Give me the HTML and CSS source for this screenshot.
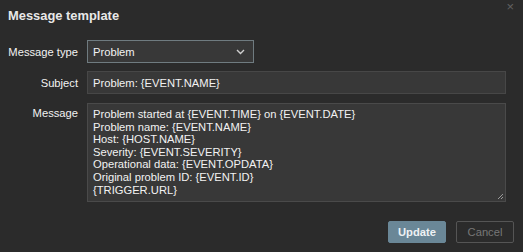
FILE: index.html
```html
<!DOCTYPE html>
<html>
<head>
<meta charset="utf-8">
<link rel="stylesheet" href="styles.css">
</head>
<body>
<div class="dialog">
  <div class="header">
    <h1 class="title">Message template</h1>
    <span class="close">×</span>
  </div>
  <div class="form">
    <label class="label label-type">Message type</label>
    <div class="select">
      <span>Problem</span>
      <svg class="chev" width="9" height="6" viewBox="0 0 9 6"><path d="M1 1 L4.5 4.5 L8 1" fill="none" stroke="#cfcfcf" stroke-width="1.4"/></svg>
    </div>
    <label class="label">Subject</label>
    <div class="input">Problem: {EVENT.NAME}</div>
    <label class="label label-msg">Message</label>
    <div class="textarea">Problem started at {EVENT.TIME} on {EVENT.DATE}<br>Problem name: {EVENT.NAME}<br>Host: {HOST.NAME}<br>Severity: {EVENT.SEVERITY}<br>Operational data: {EVENT.OPDATA}<br>Original problem ID: {EVENT.ID}<br>{TRIGGER.URL}
      <svg class="grip" width="8" height="8" viewBox="0 0 8 8"><path d="M7 2 L2 7 M7 5 L5 7" stroke="#9a9a9a" stroke-width="1"/></svg>
    </div>
  </div>
  <div class="footer">
    <button class="btn btn-primary">Update</button>
    <button class="btn btn-cancel">Cancel</button>
  </div>
</div>
</body>
</html>
```
FILE: styles.css
```css
html, body {
  margin: 0;
  padding: 0;
  background: #2b2b2b;
  width: 523px;
  height: 252px;
  overflow: hidden;
}
.dialog {
  font-family: "Liberation Sans", Arial, sans-serif;
  font-size: 11.2px;
  color: #f0f0f0;
  padding: 0 9px 0 8px;
  display: flex;
  flex-direction: column;
}
.header {
  position: relative;
  height: 40px;
}
.title {
  margin: 0;
  padding-top: 8px;
  font-size: 12.9px;
  font-weight: bold;
  color: #e8e8e8;
  line-height: 15px;
}
.close {
  position: absolute;
  right: 0;
  top: 2px;
  font-size: 13px;
  color: #626262;
  line-height: 10px;
}
.form {
  display: grid;
  grid-template-columns: 70px 419px;
  column-gap: 9px;
  row-gap: 8px;
  align-items: center;
}
.label {
  text-align: right;
  white-space: nowrap;
  color: #f2f2f2;
}
.label-msg {
  align-self: start;
  padding-top: 5px;
}
.select {
  width: 167px;
  height: 23px;
  box-sizing: border-box;
  border: 1px solid #6f7b80;
  background: #383838;
  display: flex;
  align-items: center;
  justify-content: space-between;
  padding: 0 8px 0 5px;
  color: #f2f2f2;
}
.chev { margin-top: 1px; }
.input {
  height: 23px;
  box-sizing: border-box;
  border: 1px solid #474747;
  background: #383838;
  padding: 0 5px;
  display: flex;
  align-items: center;
  color: #f2f2f2;
}
.textarea {
  position: relative;
  margin-top: 1px;
  height: 99px;
  box-sizing: border-box;
  border: 1px solid #4a4a4a;
  background: #383838;
  padding: 4px 5px;
  line-height: 12.6px;
  color: #f2f2f2;
}
.grip {
  position: absolute;
  right: 1px;
  bottom: 1px;
}
.footer {
  display: flex;
  justify-content: flex-end;
  gap: 10px;
  margin-top: 19px;
  padding-right: 0;
}
.btn {
  font-family: "Liberation Sans", Arial, sans-serif;
  font-size: 11.2px;
  height: 22px;
  width: 58px;
  box-sizing: border-box;
  padding: 0;
  border-radius: 2px;
}
.btn-primary {
  background: #6a8797;
  border: 1px solid #6a8797;
  color: #eef2f4;
  font-weight: bold;
}
.btn-cancel {
  background: transparent;
  border: 1px solid #555;
  color: #777;
}
```
